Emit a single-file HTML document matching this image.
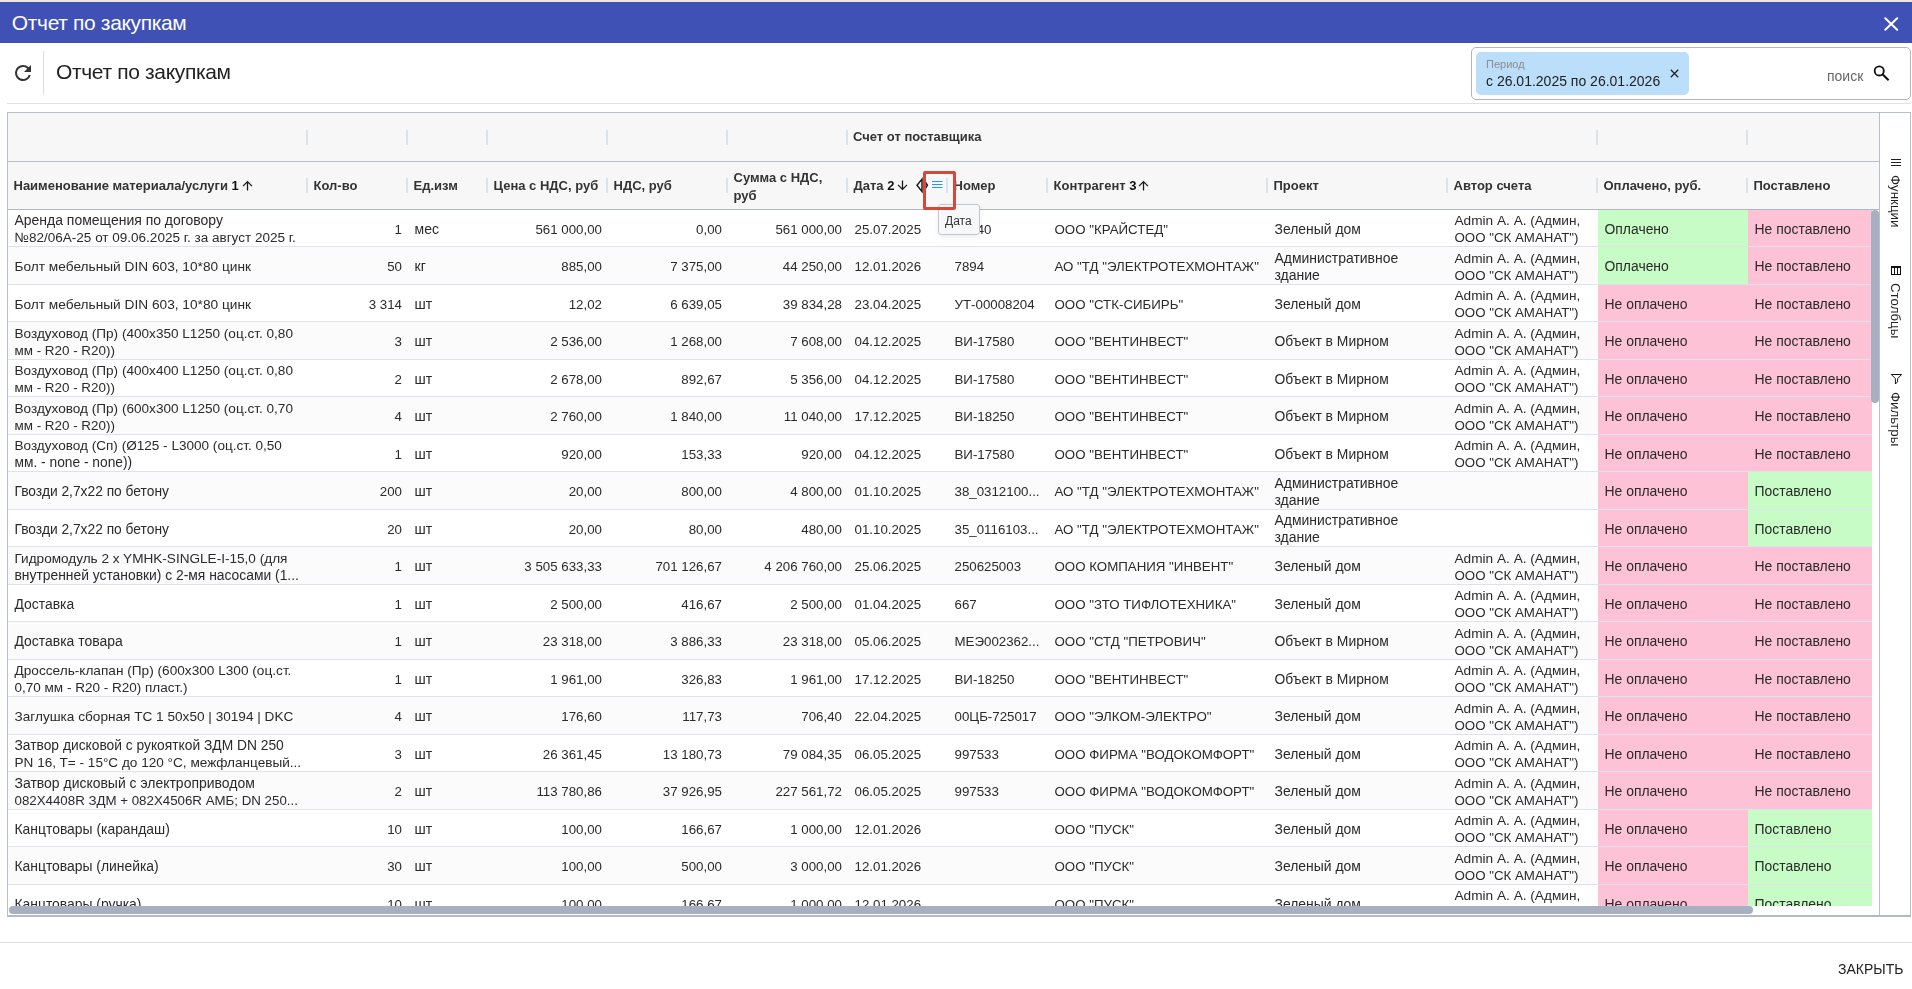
<!DOCTYPE html><html><head><meta charset="utf-8"><title>Отчет по закупкам</title><style>
*{box-sizing:border-box;margin:0;padding:0}
html,body{width:1912px;height:989px;overflow:hidden;background:#fff;font-family:"Liberation Sans",sans-serif;color:#333}
.abs{position:absolute}
#strip{left:0;top:0;width:1912px;height:2px;background:#ebe8e4}
#titlebar{left:0;top:2px;width:1912px;height:41px;background:#3f51b5}
#ttl{left:11.8px;top:11.1px;font-size:21px;letter-spacing:-0.35px;line-height:23px;color:#fff;white-space:nowrap}
#tb-title{will-change:transform;left:56.3px;top:60px;font-size:21px;letter-spacing:-0.35px;line-height:23px;color:#222;white-space:nowrap}
#sep1{left:43px;top:51px;width:1px;height:44px;background:#dcdcdc}
#rule{left:7px;top:103px;width:1904px;height:1px;background:#e2e2e2}
#search{left:1471px;top:47px;width:440px;height:53px;border:1px solid #b5b5b5;border-radius:5px;background:#fff}
#chip{left:1476px;top:52px;width:213px;height:43px;background:#bbdefb;border-radius:5px}
#chiplbl{will-change:transform;left:1486px;top:58.3px;font-size:11px;line-height:13px;color:#8d8d8d;white-space:nowrap}
#chipval{will-change:transform;left:1486px;top:73px;font-size:14px;line-height:16px;color:#222;white-space:nowrap}
#poisk{will-change:transform;left:1826.5px;top:68px;font-size:14px;line-height:16px;color:#666;white-space:nowrap}
#tbl{will-change:transform;left:7px;top:112px;width:1904px;height:805px;border:1px solid #b9bfca;border-bottom:2px solid #b3b9c4;background:#fff;overflow:hidden}
#hdr{left:0;top:0;width:1872px;height:97px;background:#f7f7f7}
#hb1{left:0;top:48px;width:1872px;height:1px;background:#b9bfca}
#hb2{left:0;top:96px;width:1872px;height:1px;background:#b0b7c3}
#side{left:1871px;top:-1px;width:1px;height:805px;background:#b9bfca}
.hs{position:absolute;width:2px;height:15px;background:#dde2ea}
.ht{position:absolute;font-size:13px;font-weight:bold;line-height:16px;color:#333;white-space:nowrap}
#body{left:0;top:96.5px;width:1864px;height:696px;overflow:hidden}
.r{position:absolute;left:0;width:1890px;height:37.5px;border-bottom:1px solid #dde2eb}
.r.alt{background:#fbfbfb}
.c{position:absolute;top:0;height:36.5px;display:flex;align-items:center;font-size:13.5px;line-height:17px;color:#2a2a2a;white-space:nowrap;padding:0 5.5px 0 7px}
.c.rt{justify-content:flex-end;text-align:right}
.in{position:relative;top:1.6px}
.c.g{background:#c8fcc7}
.c.p{background:#fdc2d6}
#vsb{left:1863px;top:97px;width:8px;height:193px;background:#a7b0c1;border-radius:4px}
#hsb{left:0.5px;top:793px;width:1744px;height:8px;background:#a7b0c1;border-radius:4px}
#hsbtrack{left:0;top:793px;width:1864px;height:8px;background:#fff}
.vt{will-change:transform;position:absolute;writing-mode:vertical-rl;font-size:13.3px;line-height:15px;color:#222;white-space:nowrap}
#footrule{left:0;top:942px;width:1912px;height:1px;background:#e0e0e0}
#close{will-change:transform;left:1838px;top:961px;font-size:14px;line-height:16px;color:#222;white-space:nowrap}
#tip{left:938px;top:204px;width:41.5px;height:31px;border:1px solid #c3c8d0;border-radius:3px;background:#f7f8f9;box-shadow:0 2px 5px rgba(0,0,0,.08)}
#tiptxt{will-change:transform;left:945px;top:213.5px;font-size:12px;line-height:14px;color:#333;white-space:nowrap}
#redbox{left:922.6px;top:170.6px;width:33px;height:39px;border:3px solid #d6483c;border-radius:2px}
</style></head><body>
<div id="strip" class="abs"></div>
<div id="titlebar" class="abs"></div>
<div id="ttl" class="abs">Отчет по закупкам</div>
<svg class="abs" style="left:1884px;top:17px" width="14.5" height="14" viewBox="0 0 14.5 14"><path d="M1.3 1.2L13.2 12.8M13.2 1.2L1.3 12.8" stroke="#fff" stroke-width="2" stroke-linecap="round"/></svg>
<svg class="abs" style="left:11px;top:61px" width="24" height="24" viewBox="0 0 24 24"><path fill="#333" d="M17.65 6.35A7.958 7.958 0 0 0 12 4a8 8 0 1 0 7.73 10h-2.08A5.99 5.99 0 0 1 12 18a6 6 0 1 1 0-12c1.66 0 3.14.69 4.22 1.78L13 11h7V4l-2.35 2.35z"/></svg>
<div id="sep1" class="abs"></div>
<div id="tb-title" class="abs">Отчет по закупкам</div>
<div id="rule" class="abs"></div>
<div id="search" class="abs"></div>
<div id="chip" class="abs"></div>
<div id="chiplbl" class="abs">Период</div>
<div id="chipval" class="abs">с 26.01.2025 по 26.01.2026</div>
<svg class="abs" style="left:1669.5px;top:68.5px" width="9" height="9" viewBox="0 0 9 9"><path d="M0.8 0.8L8.2 8.2M8.2 0.8L0.8 8.2" stroke="#222" stroke-width="1.3"/></svg>
<div id="poisk" class="abs">поиск</div>
<svg class="abs" style="left:1872px;top:64px" width="19" height="19" viewBox="0 0 19 19"><circle cx="7.25" cy="6.95" r="4.55" fill="none" stroke="#111" stroke-width="1.8"/><path d="M10.5 10.2L16.6 16.3" stroke="#111" stroke-width="2.1"/></svg>
<div id="tbl" class="abs">
<div id="hdr" class="abs"></div><div id="hb1" class="abs"></div><div id="hb2" class="abs"></div>
<div class="hs" style="left:298.0px;top:17px"></div>
<div class="hs" style="left:398.0px;top:17px"></div>
<div class="hs" style="left:478.0px;top:17px"></div>
<div class="hs" style="left:598.0px;top:17px"></div>
<div class="hs" style="left:718.0px;top:17px"></div>
<div class="hs" style="left:838.0px;top:17px"></div>
<div class="hs" style="left:1588.0px;top:17px"></div>
<div class="hs" style="left:1738.0px;top:17px"></div>
<div class="ht" style="left:845px;top:16px">Счет от поставщика</div>
<div class="hs" style="left:298.0px;top:65px"></div>
<div class="hs" style="left:398.0px;top:65px"></div>
<div class="hs" style="left:478.0px;top:65px"></div>
<div class="hs" style="left:598.0px;top:65px"></div>
<div class="hs" style="left:718.0px;top:65px"></div>
<div class="hs" style="left:838.0px;top:65px"></div>
<div class="hs" style="left:938.0px;top:65px"></div>
<div class="hs" style="left:1038.0px;top:65px"></div>
<div class="hs" style="left:1258.0px;top:65px"></div>
<div class="hs" style="left:1438.0px;top:65px"></div>
<div class="hs" style="left:1588.0px;top:65px"></div>
<div class="hs" style="left:1738.0px;top:65px"></div>
<div class="ht" style="left:5.5px;top:64.6px">Наименование материала/услуги <span style="color:#111">1</span></div>
<div class="ht" style="left:305.5px;top:64.6px">Кол-во</div>
<div class="ht" style="left:405.5px;top:64.6px">Ед.изм</div>
<div class="ht" style="left:485.5px;top:64.6px">Цена с НДС, руб</div>
<div class="ht" style="left:605.5px;top:64.6px">НДС, руб</div>
<div class="ht" style="left:725.5px;top:56.30000000000001px;line-height:17.3px">Сумма с НДС,<br>руб</div>
<div class="ht" style="left:845.5px;top:64.6px">Дата <span style="color:#111">2</span></div>
<div class="ht" style="left:945.5px;top:64.6px">Номер</div>
<div class="ht" style="left:1045.5px;top:64.6px">Контрагент <span style="color:#111">3</span></div>
<div class="ht" style="left:1265.5px;top:64.6px">Проект</div>
<div class="ht" style="left:1445.5px;top:64.6px">Автор счета</div>
<div class="ht" style="left:1595.5px;top:64.6px">Оплачено, руб.</div>
<div class="ht" style="left:1745.5px;top:64.6px">Поставлено</div>
<svg class="abs" style="left:233.5px;top:67px" width="11" height="11" viewBox="0 0 11 11"><path d="M5.5 10.5V1.6M1 6.1L5.5 1.6L10 6.1" fill="none" stroke="#1a1a1a" stroke-width="1.3"/></svg>
<svg class="abs" style="left:889px;top:67px" width="11" height="11" viewBox="0 0 11 11"><path d="M5.5 0.5V9.4M1 4.9L5.5 9.4L10 4.9" fill="none" stroke="#1a1a1a" stroke-width="1.3"/></svg>
<svg class="abs" style="left:1130px;top:67px" width="11" height="11" viewBox="0 0 11 11"><path d="M5.5 10.5V1.6M1 6.1L5.5 1.6L10 6.1" fill="none" stroke="#1a1a1a" stroke-width="1.3"/></svg>
<svg class="abs" style="left:906px;top:64px" width="16" height="17" viewBox="914 177 16 17"><path d="M922 179.1L917 185.3L922 191.6Z" fill="none" stroke="#111" stroke-width="1.4" stroke-linejoin="miter"/><path d="M925.3 182L927.4 185.3L925.3 188.6" fill="none" stroke="#111" stroke-width="1.4"/></svg>
<svg class="abs" style="left:924px;top:67px" width="11" height="9" viewBox="0 0 11 9"><path d="M0 1.5H10.5M0 4.5H10.5M0 7.5H10.5" stroke="#2196f3" stroke-width="1.1"/></svg>
<div id="body" class="abs">
<div class="r" style="top:0.0px">
<div class="c" style="left:-0.5px;width:300px"><div class="in"><div style="font-size:13.97px">Аренда помещения по договору</div><div style="font-size:13.52px">№82/06A-25 от 09.06.2025 г. за август 2025 г.</div></div></div>
<div class="c rt" style="left:299.5px;width:100px"><div class="in"><div style="font-size:13.30px">1</div></div></div>
<div class="c" style="left:399.5px;width:80px"><div class="in"><div style="font-size:14.00px">мес</div></div></div>
<div class="c rt" style="left:479.5px;width:120px"><div class="in"><div style="font-size:13.30px">561 000,00</div></div></div>
<div class="c rt" style="left:599.5px;width:120px"><div class="in"><div style="font-size:13.30px">0,00</div></div></div>
<div class="c rt" style="left:719.5px;width:120px"><div class="in"><div style="font-size:13.30px">561 000,00</div></div></div>
<div class="c" style="left:839.5px;width:100px"><div class="in"><div style="font-size:13.30px">25.07.2025</div></div></div>
<div class="c" style="left:939.5px;width:100px"><div class="in"><div style="font-size:13.30px">38540</div></div></div>
<div class="c" style="left:1039.5px;width:220px"><div class="in"><div style="font-size:13.30px">ООО "КРАЙСТЕД"</div></div></div>
<div class="c" style="left:1259.5px;width:180px"><div class="in"><div style="font-size:13.93px">Зеленый дом</div></div></div>
<div class="c" style="left:1439.5px;width:150px"><div class="in"><div style="font-size:13.65px">Admin А. А. (Админ,</div><div style="font-size:13.30px">ООО "СК АМАНАТ")</div></div></div>
<div class="c g" style="left:1589.5px;width:150px"><div class="in"><div style="font-size:13.91px">Оплачено</div></div></div>
<div class="c p" style="left:1739.5px;width:150px"><div class="in"><div style="font-size:13.94px">Не поставлено</div></div></div>
</div>
<div class="r alt" style="top:37.5px">
<div class="c" style="left:-0.5px;width:300px"><div class="in"><div style="font-size:13.69px">Болт мебельный DIN 603, 10*80 цинк</div></div></div>
<div class="c rt" style="left:299.5px;width:100px"><div class="in"><div style="font-size:13.30px">50</div></div></div>
<div class="c" style="left:399.5px;width:80px"><div class="in"><div style="font-size:14.00px">кг</div></div></div>
<div class="c rt" style="left:479.5px;width:120px"><div class="in"><div style="font-size:13.30px">885,00</div></div></div>
<div class="c rt" style="left:599.5px;width:120px"><div class="in"><div style="font-size:13.30px">7 375,00</div></div></div>
<div class="c rt" style="left:719.5px;width:120px"><div class="in"><div style="font-size:13.30px">44 250,00</div></div></div>
<div class="c" style="left:839.5px;width:100px"><div class="in"><div style="font-size:13.30px">12.01.2026</div></div></div>
<div class="c" style="left:939.5px;width:100px"><div class="in"><div style="font-size:13.30px">7894</div></div></div>
<div class="c" style="left:1039.5px;width:220px"><div class="in"><div style="font-size:13.30px">АО "ТД "ЭЛЕКТРОТЕХМОНТАЖ"</div></div></div>
<div class="c" style="left:1259.5px;width:180px"><div class="in"><div style="font-size:13.96px">Административное</div><div style="font-size:14.00px">здание</div></div></div>
<div class="c" style="left:1439.5px;width:150px"><div class="in"><div style="font-size:13.65px">Admin А. А. (Админ,</div><div style="font-size:13.30px">ООО "СК АМАНАТ")</div></div></div>
<div class="c g" style="left:1589.5px;width:150px"><div class="in"><div style="font-size:13.91px">Оплачено</div></div></div>
<div class="c p" style="left:1739.5px;width:150px"><div class="in"><div style="font-size:13.94px">Не поставлено</div></div></div>
</div>
<div class="r" style="top:75.0px">
<div class="c" style="left:-0.5px;width:300px"><div class="in"><div style="font-size:13.69px">Болт мебельный DIN 603, 10*80 цинк</div></div></div>
<div class="c rt" style="left:299.5px;width:100px"><div class="in"><div style="font-size:13.30px">3 314</div></div></div>
<div class="c" style="left:399.5px;width:80px"><div class="in"><div style="font-size:14.00px">шт</div></div></div>
<div class="c rt" style="left:479.5px;width:120px"><div class="in"><div style="font-size:13.30px">12,02</div></div></div>
<div class="c rt" style="left:599.5px;width:120px"><div class="in"><div style="font-size:13.30px">6 639,05</div></div></div>
<div class="c rt" style="left:719.5px;width:120px"><div class="in"><div style="font-size:13.30px">39 834,28</div></div></div>
<div class="c" style="left:839.5px;width:100px"><div class="in"><div style="font-size:13.30px">23.04.2025</div></div></div>
<div class="c" style="left:939.5px;width:100px"><div class="in"><div style="font-size:13.30px">УТ-00008204</div></div></div>
<div class="c" style="left:1039.5px;width:220px"><div class="in"><div style="font-size:13.30px">ООО "СТК-СИБИРЬ"</div></div></div>
<div class="c" style="left:1259.5px;width:180px"><div class="in"><div style="font-size:13.93px">Зеленый дом</div></div></div>
<div class="c" style="left:1439.5px;width:150px"><div class="in"><div style="font-size:13.65px">Admin А. А. (Админ,</div><div style="font-size:13.30px">ООО "СК АМАНАТ")</div></div></div>
<div class="c p" style="left:1589.5px;width:150px"><div class="in"><div style="font-size:13.93px">Не оплачено</div></div></div>
<div class="c p" style="left:1739.5px;width:150px"><div class="in"><div style="font-size:13.94px">Не поставлено</div></div></div>
</div>
<div class="r alt" style="top:112.5px">
<div class="c" style="left:-0.5px;width:300px"><div class="in"><div style="font-size:13.58px">Воздуховод (Пр) (400x350 L1250 (оц.ст. 0,80</div><div style="font-size:13.42px">мм - R20 - R20))</div></div></div>
<div class="c rt" style="left:299.5px;width:100px"><div class="in"><div style="font-size:13.30px">3</div></div></div>
<div class="c" style="left:399.5px;width:80px"><div class="in"><div style="font-size:14.00px">шт</div></div></div>
<div class="c rt" style="left:479.5px;width:120px"><div class="in"><div style="font-size:13.30px">2 536,00</div></div></div>
<div class="c rt" style="left:599.5px;width:120px"><div class="in"><div style="font-size:13.30px">1 268,00</div></div></div>
<div class="c rt" style="left:719.5px;width:120px"><div class="in"><div style="font-size:13.30px">7 608,00</div></div></div>
<div class="c" style="left:839.5px;width:100px"><div class="in"><div style="font-size:13.30px">04.12.2025</div></div></div>
<div class="c" style="left:939.5px;width:100px"><div class="in"><div style="font-size:13.30px">ВИ-17580</div></div></div>
<div class="c" style="left:1039.5px;width:220px"><div class="in"><div style="font-size:13.30px">ООО "ВЕНТИНВЕСТ"</div></div></div>
<div class="c" style="left:1259.5px;width:180px"><div class="in"><div style="font-size:13.89px">Объект в Мирном</div></div></div>
<div class="c" style="left:1439.5px;width:150px"><div class="in"><div style="font-size:13.65px">Admin А. А. (Админ,</div><div style="font-size:13.30px">ООО "СК АМАНАТ")</div></div></div>
<div class="c p" style="left:1589.5px;width:150px"><div class="in"><div style="font-size:13.93px">Не оплачено</div></div></div>
<div class="c p" style="left:1739.5px;width:150px"><div class="in"><div style="font-size:13.94px">Не поставлено</div></div></div>
</div>
<div class="r" style="top:150.0px">
<div class="c" style="left:-0.5px;width:300px"><div class="in"><div style="font-size:13.58px">Воздуховод (Пр) (400x400 L1250 (оц.ст. 0,80</div><div style="font-size:13.42px">мм - R20 - R20))</div></div></div>
<div class="c rt" style="left:299.5px;width:100px"><div class="in"><div style="font-size:13.30px">2</div></div></div>
<div class="c" style="left:399.5px;width:80px"><div class="in"><div style="font-size:14.00px">шт</div></div></div>
<div class="c rt" style="left:479.5px;width:120px"><div class="in"><div style="font-size:13.30px">2 678,00</div></div></div>
<div class="c rt" style="left:599.5px;width:120px"><div class="in"><div style="font-size:13.30px">892,67</div></div></div>
<div class="c rt" style="left:719.5px;width:120px"><div class="in"><div style="font-size:13.30px">5 356,00</div></div></div>
<div class="c" style="left:839.5px;width:100px"><div class="in"><div style="font-size:13.30px">04.12.2025</div></div></div>
<div class="c" style="left:939.5px;width:100px"><div class="in"><div style="font-size:13.30px">ВИ-17580</div></div></div>
<div class="c" style="left:1039.5px;width:220px"><div class="in"><div style="font-size:13.30px">ООО "ВЕНТИНВЕСТ"</div></div></div>
<div class="c" style="left:1259.5px;width:180px"><div class="in"><div style="font-size:13.89px">Объект в Мирном</div></div></div>
<div class="c" style="left:1439.5px;width:150px"><div class="in"><div style="font-size:13.65px">Admin А. А. (Админ,</div><div style="font-size:13.30px">ООО "СК АМАНАТ")</div></div></div>
<div class="c p" style="left:1589.5px;width:150px"><div class="in"><div style="font-size:13.93px">Не оплачено</div></div></div>
<div class="c p" style="left:1739.5px;width:150px"><div class="in"><div style="font-size:13.94px">Не поставлено</div></div></div>
</div>
<div class="r alt" style="top:187.5px">
<div class="c" style="left:-0.5px;width:300px"><div class="in"><div style="font-size:13.58px">Воздуховод (Пр) (600x300 L1250 (оц.ст. 0,70</div><div style="font-size:13.42px">мм - R20 - R20))</div></div></div>
<div class="c rt" style="left:299.5px;width:100px"><div class="in"><div style="font-size:13.30px">4</div></div></div>
<div class="c" style="left:399.5px;width:80px"><div class="in"><div style="font-size:14.00px">шт</div></div></div>
<div class="c rt" style="left:479.5px;width:120px"><div class="in"><div style="font-size:13.30px">2 760,00</div></div></div>
<div class="c rt" style="left:599.5px;width:120px"><div class="in"><div style="font-size:13.30px">1 840,00</div></div></div>
<div class="c rt" style="left:719.5px;width:120px"><div class="in"><div style="font-size:13.30px">11 040,00</div></div></div>
<div class="c" style="left:839.5px;width:100px"><div class="in"><div style="font-size:13.30px">17.12.2025</div></div></div>
<div class="c" style="left:939.5px;width:100px"><div class="in"><div style="font-size:13.30px">ВИ-18250</div></div></div>
<div class="c" style="left:1039.5px;width:220px"><div class="in"><div style="font-size:13.30px">ООО "ВЕНТИНВЕСТ"</div></div></div>
<div class="c" style="left:1259.5px;width:180px"><div class="in"><div style="font-size:13.89px">Объект в Мирном</div></div></div>
<div class="c" style="left:1439.5px;width:150px"><div class="in"><div style="font-size:13.65px">Admin А. А. (Админ,</div><div style="font-size:13.30px">ООО "СК АМАНАТ")</div></div></div>
<div class="c p" style="left:1589.5px;width:150px"><div class="in"><div style="font-size:13.93px">Не оплачено</div></div></div>
<div class="c p" style="left:1739.5px;width:150px"><div class="in"><div style="font-size:13.94px">Не поставлено</div></div></div>
</div>
<div class="r" style="top:225.0px">
<div class="c" style="left:-0.5px;width:300px"><div class="in"><div style="font-size:13.57px">Воздуховод (Сп) (Ø125 - L3000 (оц.ст. 0,50</div><div style="font-size:13.77px">мм. - none - none))</div></div></div>
<div class="c rt" style="left:299.5px;width:100px"><div class="in"><div style="font-size:13.30px">1</div></div></div>
<div class="c" style="left:399.5px;width:80px"><div class="in"><div style="font-size:14.00px">шт</div></div></div>
<div class="c rt" style="left:479.5px;width:120px"><div class="in"><div style="font-size:13.30px">920,00</div></div></div>
<div class="c rt" style="left:599.5px;width:120px"><div class="in"><div style="font-size:13.30px">153,33</div></div></div>
<div class="c rt" style="left:719.5px;width:120px"><div class="in"><div style="font-size:13.30px">920,00</div></div></div>
<div class="c" style="left:839.5px;width:100px"><div class="in"><div style="font-size:13.30px">04.12.2025</div></div></div>
<div class="c" style="left:939.5px;width:100px"><div class="in"><div style="font-size:13.30px">ВИ-17580</div></div></div>
<div class="c" style="left:1039.5px;width:220px"><div class="in"><div style="font-size:13.30px">ООО "ВЕНТИНВЕСТ"</div></div></div>
<div class="c" style="left:1259.5px;width:180px"><div class="in"><div style="font-size:13.89px">Объект в Мирном</div></div></div>
<div class="c" style="left:1439.5px;width:150px"><div class="in"><div style="font-size:13.65px">Admin А. А. (Админ,</div><div style="font-size:13.30px">ООО "СК АМАНАТ")</div></div></div>
<div class="c p" style="left:1589.5px;width:150px"><div class="in"><div style="font-size:13.93px">Не оплачено</div></div></div>
<div class="c p" style="left:1739.5px;width:150px"><div class="in"><div style="font-size:13.94px">Не поставлено</div></div></div>
</div>
<div class="r alt" style="top:262.5px">
<div class="c" style="left:-0.5px;width:300px"><div class="in"><div style="font-size:13.79px">Гвозди 2,7x22 по бетону</div></div></div>
<div class="c rt" style="left:299.5px;width:100px"><div class="in"><div style="font-size:13.30px">200</div></div></div>
<div class="c" style="left:399.5px;width:80px"><div class="in"><div style="font-size:14.00px">шт</div></div></div>
<div class="c rt" style="left:479.5px;width:120px"><div class="in"><div style="font-size:13.30px">20,00</div></div></div>
<div class="c rt" style="left:599.5px;width:120px"><div class="in"><div style="font-size:13.30px">800,00</div></div></div>
<div class="c rt" style="left:719.5px;width:120px"><div class="in"><div style="font-size:13.30px">4 800,00</div></div></div>
<div class="c" style="left:839.5px;width:100px"><div class="in"><div style="font-size:13.30px">01.10.2025</div></div></div>
<div class="c" style="left:939.5px;width:100px"><div class="in"><div style="font-size:13.30px">38_0312100...</div></div></div>
<div class="c" style="left:1039.5px;width:220px"><div class="in"><div style="font-size:13.30px">АО "ТД "ЭЛЕКТРОТЕХМОНТАЖ"</div></div></div>
<div class="c" style="left:1259.5px;width:180px"><div class="in"><div style="font-size:13.96px">Административное</div><div style="font-size:14.00px">здание</div></div></div>
<div class="c" style="left:1439.5px;width:150px"><div class="in"></div></div>
<div class="c p" style="left:1589.5px;width:150px"><div class="in"><div style="font-size:13.93px">Не оплачено</div></div></div>
<div class="c g" style="left:1739.5px;width:150px"><div class="in"><div style="font-size:13.93px">Поставлено</div></div></div>
</div>
<div class="r" style="top:300.0px">
<div class="c" style="left:-0.5px;width:300px"><div class="in"><div style="font-size:13.79px">Гвозди 2,7x22 по бетону</div></div></div>
<div class="c rt" style="left:299.5px;width:100px"><div class="in"><div style="font-size:13.30px">20</div></div></div>
<div class="c" style="left:399.5px;width:80px"><div class="in"><div style="font-size:14.00px">шт</div></div></div>
<div class="c rt" style="left:479.5px;width:120px"><div class="in"><div style="font-size:13.30px">20,00</div></div></div>
<div class="c rt" style="left:599.5px;width:120px"><div class="in"><div style="font-size:13.30px">80,00</div></div></div>
<div class="c rt" style="left:719.5px;width:120px"><div class="in"><div style="font-size:13.30px">480,00</div></div></div>
<div class="c" style="left:839.5px;width:100px"><div class="in"><div style="font-size:13.30px">01.10.2025</div></div></div>
<div class="c" style="left:939.5px;width:100px"><div class="in"><div style="font-size:13.30px">35_0116103...</div></div></div>
<div class="c" style="left:1039.5px;width:220px"><div class="in"><div style="font-size:13.30px">АО "ТД "ЭЛЕКТРОТЕХМОНТАЖ"</div></div></div>
<div class="c" style="left:1259.5px;width:180px"><div class="in"><div style="font-size:13.96px">Административное</div><div style="font-size:14.00px">здание</div></div></div>
<div class="c" style="left:1439.5px;width:150px"><div class="in"></div></div>
<div class="c p" style="left:1589.5px;width:150px"><div class="in"><div style="font-size:13.93px">Не оплачено</div></div></div>
<div class="c g" style="left:1739.5px;width:150px"><div class="in"><div style="font-size:13.93px">Поставлено</div></div></div>
</div>
<div class="r alt" style="top:337.5px">
<div class="c" style="left:-0.5px;width:300px"><div class="in"><div style="font-size:13.58px">Гидромодуль 2 x YMHK-SINGLE-I-15,0 (для</div><div style="font-size:13.85px">внутренней установки) с 2-мя насосами (1...</div></div></div>
<div class="c rt" style="left:299.5px;width:100px"><div class="in"><div style="font-size:13.30px">1</div></div></div>
<div class="c" style="left:399.5px;width:80px"><div class="in"><div style="font-size:14.00px">шт</div></div></div>
<div class="c rt" style="left:479.5px;width:120px"><div class="in"><div style="font-size:13.30px">3 505 633,33</div></div></div>
<div class="c rt" style="left:599.5px;width:120px"><div class="in"><div style="font-size:13.30px">701 126,67</div></div></div>
<div class="c rt" style="left:719.5px;width:120px"><div class="in"><div style="font-size:13.30px">4 206 760,00</div></div></div>
<div class="c" style="left:839.5px;width:100px"><div class="in"><div style="font-size:13.30px">25.06.2025</div></div></div>
<div class="c" style="left:939.5px;width:100px"><div class="in"><div style="font-size:13.30px">250625003</div></div></div>
<div class="c" style="left:1039.5px;width:220px"><div class="in"><div style="font-size:13.30px">ООО КОМПАНИЯ "ИНВЕНТ"</div></div></div>
<div class="c" style="left:1259.5px;width:180px"><div class="in"><div style="font-size:13.93px">Зеленый дом</div></div></div>
<div class="c" style="left:1439.5px;width:150px"><div class="in"><div style="font-size:13.65px">Admin А. А. (Админ,</div><div style="font-size:13.30px">ООО "СК АМАНАТ")</div></div></div>
<div class="c p" style="left:1589.5px;width:150px"><div class="in"><div style="font-size:13.93px">Не оплачено</div></div></div>
<div class="c p" style="left:1739.5px;width:150px"><div class="in"><div style="font-size:13.94px">Не поставлено</div></div></div>
</div>
<div class="r" style="top:375.0px">
<div class="c" style="left:-0.5px;width:300px"><div class="in"><div style="font-size:13.91px">Доставка</div></div></div>
<div class="c rt" style="left:299.5px;width:100px"><div class="in"><div style="font-size:13.30px">1</div></div></div>
<div class="c" style="left:399.5px;width:80px"><div class="in"><div style="font-size:14.00px">шт</div></div></div>
<div class="c rt" style="left:479.5px;width:120px"><div class="in"><div style="font-size:13.30px">2 500,00</div></div></div>
<div class="c rt" style="left:599.5px;width:120px"><div class="in"><div style="font-size:13.30px">416,67</div></div></div>
<div class="c rt" style="left:719.5px;width:120px"><div class="in"><div style="font-size:13.30px">2 500,00</div></div></div>
<div class="c" style="left:839.5px;width:100px"><div class="in"><div style="font-size:13.30px">01.04.2025</div></div></div>
<div class="c" style="left:939.5px;width:100px"><div class="in"><div style="font-size:13.30px">667</div></div></div>
<div class="c" style="left:1039.5px;width:220px"><div class="in"><div style="font-size:13.30px">ООО "ЗТО ТИФЛОТЕХНИКА"</div></div></div>
<div class="c" style="left:1259.5px;width:180px"><div class="in"><div style="font-size:13.93px">Зеленый дом</div></div></div>
<div class="c" style="left:1439.5px;width:150px"><div class="in"><div style="font-size:13.65px">Admin А. А. (Админ,</div><div style="font-size:13.30px">ООО "СК АМАНАТ")</div></div></div>
<div class="c p" style="left:1589.5px;width:150px"><div class="in"><div style="font-size:13.93px">Не оплачено</div></div></div>
<div class="c p" style="left:1739.5px;width:150px"><div class="in"><div style="font-size:13.94px">Не поставлено</div></div></div>
</div>
<div class="r alt" style="top:412.5px">
<div class="c" style="left:-0.5px;width:300px"><div class="in"><div style="font-size:13.95px">Доставка товара</div></div></div>
<div class="c rt" style="left:299.5px;width:100px"><div class="in"><div style="font-size:13.30px">1</div></div></div>
<div class="c" style="left:399.5px;width:80px"><div class="in"><div style="font-size:14.00px">шт</div></div></div>
<div class="c rt" style="left:479.5px;width:120px"><div class="in"><div style="font-size:13.30px">23 318,00</div></div></div>
<div class="c rt" style="left:599.5px;width:120px"><div class="in"><div style="font-size:13.30px">3 886,33</div></div></div>
<div class="c rt" style="left:719.5px;width:120px"><div class="in"><div style="font-size:13.30px">23 318,00</div></div></div>
<div class="c" style="left:839.5px;width:100px"><div class="in"><div style="font-size:13.30px">05.06.2025</div></div></div>
<div class="c" style="left:939.5px;width:100px"><div class="in"><div style="font-size:13.30px">МЕЭ002362...</div></div></div>
<div class="c" style="left:1039.5px;width:220px"><div class="in"><div style="font-size:13.30px">ООО "СТД "ПЕТРОВИЧ"</div></div></div>
<div class="c" style="left:1259.5px;width:180px"><div class="in"><div style="font-size:13.89px">Объект в Мирном</div></div></div>
<div class="c" style="left:1439.5px;width:150px"><div class="in"><div style="font-size:13.65px">Admin А. А. (Админ,</div><div style="font-size:13.30px">ООО "СК АМАНАТ")</div></div></div>
<div class="c p" style="left:1589.5px;width:150px"><div class="in"><div style="font-size:13.93px">Не оплачено</div></div></div>
<div class="c p" style="left:1739.5px;width:150px"><div class="in"><div style="font-size:13.94px">Не поставлено</div></div></div>
</div>
<div class="r" style="top:450.0px">
<div class="c" style="left:-0.5px;width:300px"><div class="in"><div style="font-size:13.65px">Дроссель-клапан (Пр) (600x300 L300 (оц.ст.</div><div style="font-size:13.52px">0,70 мм - R20 - R20) пласт.)</div></div></div>
<div class="c rt" style="left:299.5px;width:100px"><div class="in"><div style="font-size:13.30px">1</div></div></div>
<div class="c" style="left:399.5px;width:80px"><div class="in"><div style="font-size:14.00px">шт</div></div></div>
<div class="c rt" style="left:479.5px;width:120px"><div class="in"><div style="font-size:13.30px">1 961,00</div></div></div>
<div class="c rt" style="left:599.5px;width:120px"><div class="in"><div style="font-size:13.30px">326,83</div></div></div>
<div class="c rt" style="left:719.5px;width:120px"><div class="in"><div style="font-size:13.30px">1 961,00</div></div></div>
<div class="c" style="left:839.5px;width:100px"><div class="in"><div style="font-size:13.30px">17.12.2025</div></div></div>
<div class="c" style="left:939.5px;width:100px"><div class="in"><div style="font-size:13.30px">ВИ-18250</div></div></div>
<div class="c" style="left:1039.5px;width:220px"><div class="in"><div style="font-size:13.30px">ООО "ВЕНТИНВЕСТ"</div></div></div>
<div class="c" style="left:1259.5px;width:180px"><div class="in"><div style="font-size:13.89px">Объект в Мирном</div></div></div>
<div class="c" style="left:1439.5px;width:150px"><div class="in"><div style="font-size:13.65px">Admin А. А. (Админ,</div><div style="font-size:13.30px">ООО "СК АМАНАТ")</div></div></div>
<div class="c p" style="left:1589.5px;width:150px"><div class="in"><div style="font-size:13.93px">Не оплачено</div></div></div>
<div class="c p" style="left:1739.5px;width:150px"><div class="in"><div style="font-size:13.94px">Не поставлено</div></div></div>
</div>
<div class="r alt" style="top:487.5px">
<div class="c" style="left:-0.5px;width:300px"><div class="in"><div style="font-size:13.62px">Заглушка сборная TC 1 50x50 | 30194 | DKC</div></div></div>
<div class="c rt" style="left:299.5px;width:100px"><div class="in"><div style="font-size:13.30px">4</div></div></div>
<div class="c" style="left:399.5px;width:80px"><div class="in"><div style="font-size:14.00px">шт</div></div></div>
<div class="c rt" style="left:479.5px;width:120px"><div class="in"><div style="font-size:13.30px">176,60</div></div></div>
<div class="c rt" style="left:599.5px;width:120px"><div class="in"><div style="font-size:13.30px">117,73</div></div></div>
<div class="c rt" style="left:719.5px;width:120px"><div class="in"><div style="font-size:13.30px">706,40</div></div></div>
<div class="c" style="left:839.5px;width:100px"><div class="in"><div style="font-size:13.30px">22.04.2025</div></div></div>
<div class="c" style="left:939.5px;width:100px"><div class="in"><div style="font-size:13.30px">00ЦБ-725017</div></div></div>
<div class="c" style="left:1039.5px;width:220px"><div class="in"><div style="font-size:13.30px">ООО "ЭЛКОМ-ЭЛЕКТРО"</div></div></div>
<div class="c" style="left:1259.5px;width:180px"><div class="in"><div style="font-size:13.93px">Зеленый дом</div></div></div>
<div class="c" style="left:1439.5px;width:150px"><div class="in"><div style="font-size:13.65px">Admin А. А. (Админ,</div><div style="font-size:13.30px">ООО "СК АМАНАТ")</div></div></div>
<div class="c p" style="left:1589.5px;width:150px"><div class="in"><div style="font-size:13.93px">Не оплачено</div></div></div>
<div class="c p" style="left:1739.5px;width:150px"><div class="in"><div style="font-size:13.94px">Не поставлено</div></div></div>
</div>
<div class="r" style="top:525.0px">
<div class="c" style="left:-0.5px;width:300px"><div class="in"><div style="font-size:13.80px">Затвор дисковой с рукояткой ЗДМ DN 250</div><div style="font-size:13.58px">PN 16, T= - 15°C до 120 °C, межфланцевый...</div></div></div>
<div class="c rt" style="left:299.5px;width:100px"><div class="in"><div style="font-size:13.30px">3</div></div></div>
<div class="c" style="left:399.5px;width:80px"><div class="in"><div style="font-size:14.00px">шт</div></div></div>
<div class="c rt" style="left:479.5px;width:120px"><div class="in"><div style="font-size:13.30px">26 361,45</div></div></div>
<div class="c rt" style="left:599.5px;width:120px"><div class="in"><div style="font-size:13.30px">13 180,73</div></div></div>
<div class="c rt" style="left:719.5px;width:120px"><div class="in"><div style="font-size:13.30px">79 084,35</div></div></div>
<div class="c" style="left:839.5px;width:100px"><div class="in"><div style="font-size:13.30px">06.05.2025</div></div></div>
<div class="c" style="left:939.5px;width:100px"><div class="in"><div style="font-size:13.30px">997533</div></div></div>
<div class="c" style="left:1039.5px;width:220px"><div class="in"><div style="font-size:13.30px">ООО ФИРМА "ВОДОКОМФОРТ"</div></div></div>
<div class="c" style="left:1259.5px;width:180px"><div class="in"><div style="font-size:13.93px">Зеленый дом</div></div></div>
<div class="c" style="left:1439.5px;width:150px"><div class="in"><div style="font-size:13.65px">Admin А. А. (Админ,</div><div style="font-size:13.30px">ООО "СК АМАНАТ")</div></div></div>
<div class="c p" style="left:1589.5px;width:150px"><div class="in"><div style="font-size:13.93px">Не оплачено</div></div></div>
<div class="c p" style="left:1739.5px;width:150px"><div class="in"><div style="font-size:13.94px">Не поставлено</div></div></div>
</div>
<div class="r alt" style="top:562.5px">
<div class="c" style="left:-0.5px;width:300px"><div class="in"><div style="font-size:13.98px">Затвор дисковый с электроприводом</div><div style="font-size:13.30px">082X4408R ЗДМ + 082X4506R АМБ; DN 250...</div></div></div>
<div class="c rt" style="left:299.5px;width:100px"><div class="in"><div style="font-size:13.30px">2</div></div></div>
<div class="c" style="left:399.5px;width:80px"><div class="in"><div style="font-size:14.00px">шт</div></div></div>
<div class="c rt" style="left:479.5px;width:120px"><div class="in"><div style="font-size:13.30px">113 780,86</div></div></div>
<div class="c rt" style="left:599.5px;width:120px"><div class="in"><div style="font-size:13.30px">37 926,95</div></div></div>
<div class="c rt" style="left:719.5px;width:120px"><div class="in"><div style="font-size:13.30px">227 561,72</div></div></div>
<div class="c" style="left:839.5px;width:100px"><div class="in"><div style="font-size:13.30px">06.05.2025</div></div></div>
<div class="c" style="left:939.5px;width:100px"><div class="in"><div style="font-size:13.30px">997533</div></div></div>
<div class="c" style="left:1039.5px;width:220px"><div class="in"><div style="font-size:13.30px">ООО ФИРМА "ВОДОКОМФОРТ"</div></div></div>
<div class="c" style="left:1259.5px;width:180px"><div class="in"><div style="font-size:13.93px">Зеленый дом</div></div></div>
<div class="c" style="left:1439.5px;width:150px"><div class="in"><div style="font-size:13.65px">Admin А. А. (Админ,</div><div style="font-size:13.30px">ООО "СК АМАНАТ")</div></div></div>
<div class="c p" style="left:1589.5px;width:150px"><div class="in"><div style="font-size:13.93px">Не оплачено</div></div></div>
<div class="c p" style="left:1739.5px;width:150px"><div class="in"><div style="font-size:13.94px">Не поставлено</div></div></div>
</div>
<div class="r" style="top:600.0px">
<div class="c" style="left:-0.5px;width:300px"><div class="in"><div style="font-size:13.90px">Канцтовары (карандаш)</div></div></div>
<div class="c rt" style="left:299.5px;width:100px"><div class="in"><div style="font-size:13.30px">10</div></div></div>
<div class="c" style="left:399.5px;width:80px"><div class="in"><div style="font-size:14.00px">шт</div></div></div>
<div class="c rt" style="left:479.5px;width:120px"><div class="in"><div style="font-size:13.30px">100,00</div></div></div>
<div class="c rt" style="left:599.5px;width:120px"><div class="in"><div style="font-size:13.30px">166,67</div></div></div>
<div class="c rt" style="left:719.5px;width:120px"><div class="in"><div style="font-size:13.30px">1 000,00</div></div></div>
<div class="c" style="left:839.5px;width:100px"><div class="in"><div style="font-size:13.30px">12.01.2026</div></div></div>
<div class="c" style="left:939.5px;width:100px"><div class="in"></div></div>
<div class="c" style="left:1039.5px;width:220px"><div class="in"><div style="font-size:13.30px">ООО "ПУСК"</div></div></div>
<div class="c" style="left:1259.5px;width:180px"><div class="in"><div style="font-size:13.93px">Зеленый дом</div></div></div>
<div class="c" style="left:1439.5px;width:150px"><div class="in"><div style="font-size:13.65px">Admin А. А. (Админ,</div><div style="font-size:13.30px">ООО "СК АМАНАТ")</div></div></div>
<div class="c p" style="left:1589.5px;width:150px"><div class="in"><div style="font-size:13.93px">Не оплачено</div></div></div>
<div class="c g" style="left:1739.5px;width:150px"><div class="in"><div style="font-size:13.93px">Поставлено</div></div></div>
</div>
<div class="r alt" style="top:637.5px">
<div class="c" style="left:-0.5px;width:300px"><div class="in"><div style="font-size:13.89px">Канцтовары (линейка)</div></div></div>
<div class="c rt" style="left:299.5px;width:100px"><div class="in"><div style="font-size:13.30px">30</div></div></div>
<div class="c" style="left:399.5px;width:80px"><div class="in"><div style="font-size:14.00px">шт</div></div></div>
<div class="c rt" style="left:479.5px;width:120px"><div class="in"><div style="font-size:13.30px">100,00</div></div></div>
<div class="c rt" style="left:599.5px;width:120px"><div class="in"><div style="font-size:13.30px">500,00</div></div></div>
<div class="c rt" style="left:719.5px;width:120px"><div class="in"><div style="font-size:13.30px">3 000,00</div></div></div>
<div class="c" style="left:839.5px;width:100px"><div class="in"><div style="font-size:13.30px">12.01.2026</div></div></div>
<div class="c" style="left:939.5px;width:100px"><div class="in"></div></div>
<div class="c" style="left:1039.5px;width:220px"><div class="in"><div style="font-size:13.30px">ООО "ПУСК"</div></div></div>
<div class="c" style="left:1259.5px;width:180px"><div class="in"><div style="font-size:13.93px">Зеленый дом</div></div></div>
<div class="c" style="left:1439.5px;width:150px"><div class="in"><div style="font-size:13.65px">Admin А. А. (Админ,</div><div style="font-size:13.30px">ООО "СК АМАНАТ")</div></div></div>
<div class="c p" style="left:1589.5px;width:150px"><div class="in"><div style="font-size:13.93px">Не оплачено</div></div></div>
<div class="c g" style="left:1739.5px;width:150px"><div class="in"><div style="font-size:13.93px">Поставлено</div></div></div>
</div>
<div class="r" style="top:675.0px">
<div class="c" style="left:-0.5px;width:300px"><div class="in"><div style="font-size:13.88px">Канцтовары (ручка)</div></div></div>
<div class="c rt" style="left:299.5px;width:100px"><div class="in"><div style="font-size:13.30px">10</div></div></div>
<div class="c" style="left:399.5px;width:80px"><div class="in"><div style="font-size:14.00px">шт</div></div></div>
<div class="c rt" style="left:479.5px;width:120px"><div class="in"><div style="font-size:13.30px">100,00</div></div></div>
<div class="c rt" style="left:599.5px;width:120px"><div class="in"><div style="font-size:13.30px">166,67</div></div></div>
<div class="c rt" style="left:719.5px;width:120px"><div class="in"><div style="font-size:13.30px">1 000,00</div></div></div>
<div class="c" style="left:839.5px;width:100px"><div class="in"><div style="font-size:13.30px">12.01.2026</div></div></div>
<div class="c" style="left:939.5px;width:100px"><div class="in"></div></div>
<div class="c" style="left:1039.5px;width:220px"><div class="in"><div style="font-size:13.30px">ООО "ПУСК"</div></div></div>
<div class="c" style="left:1259.5px;width:180px"><div class="in"><div style="font-size:13.93px">Зеленый дом</div></div></div>
<div class="c" style="left:1439.5px;width:150px"><div class="in"><div style="font-size:13.65px">Admin А. А. (Админ,</div><div style="font-size:13.30px">ООО "СК АМАНАТ")</div></div></div>
<div class="c p" style="left:1589.5px;width:150px"><div class="in"><div style="font-size:13.93px">Не оплачено</div></div></div>
<div class="c g" style="left:1739.5px;width:150px"><div class="in"><div style="font-size:13.93px">Поставлено</div></div></div>
</div>
</div>
<div id="hsbtrack" class="abs"></div>
<div id="vsb" class="abs"></div>
<div id="hsb" class="abs"></div>
<div id="side" class="abs"></div>
</div>
<svg class="abs" style="left:1890px;top:158px" width="12" height="9" viewBox="0 0 12 9"><path d="M1 1.5H11M1 4.5H11M1 7.5H11" stroke="#222" stroke-width="1"/></svg>
<div class="vt abs" style="left:1888.3px;top:174.5px">Функции</div>
<svg class="abs" style="left:1888px;top:263px" width="16" height="14" viewBox="1888 263 16 14"><rect x="1891.5" y="266.5" width="9" height="8" fill="none" stroke="#111" stroke-width="1"/><rect x="1891" y="266" width="10" height="2" fill="#111"/><path d="M1894.5 268V274M1897.5 268V274" stroke="#111" stroke-width="1"/></svg>
<div class="vt abs" style="left:1888.3px;top:283px">Столбцы</div>
<svg class="abs" style="left:1888px;top:372px" width="16" height="14" viewBox="1888 372 16 14"><path d="M1891.3 374.5H1901.6L1897.6 378.6V381.8L1895.4 384V378.6Z" fill="none" stroke="#111" stroke-width="1" stroke-linejoin="round"/></svg>
<div class="vt abs" style="left:1888.3px;top:391.5px">Фильтры</div>
<div id="footrule" class="abs"></div>
<div id="close" class="abs">ЗАКРЫТЬ</div>
<div id="tip" class="abs"></div><div id="tiptxt" class="abs">Дата</div>
<div id="redbox" class="abs"></div>
</body></html>
